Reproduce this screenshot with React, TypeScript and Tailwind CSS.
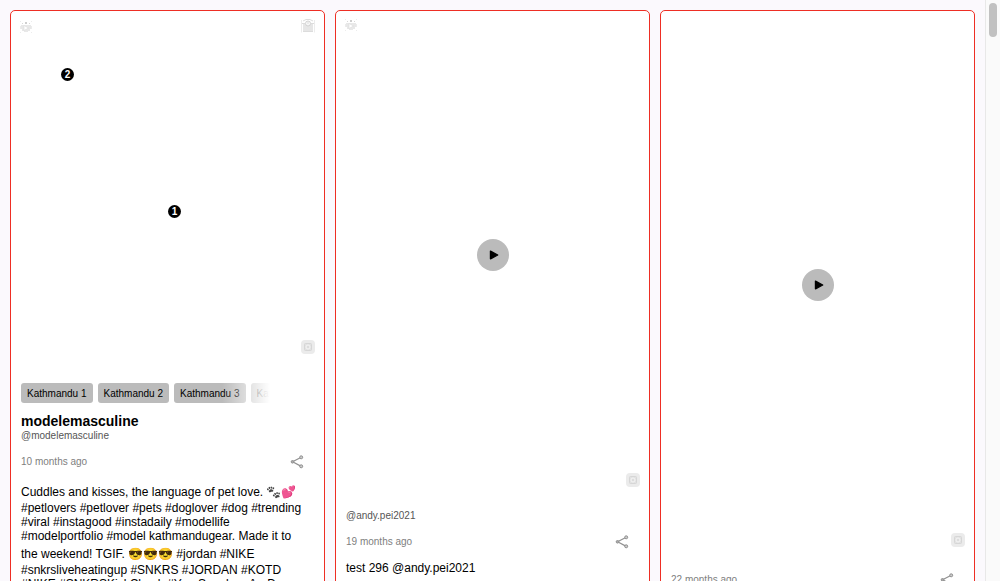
import React from "react";

const fontStack = "font-['Liberation_Sans',Arial,'Noto_Color_Emoji',sans-serif]";

function ReelIcon() {
  return (
    <svg viewBox="0 0 12 12" className="size-3" fill="none">
      <path d="M1 4h10v4h-1v2H8v1H4v-1H2V8H1z" fill="#e8e8e8" />
      <path d="M5 1h2v2H5z" fill="#cfcfcf" />
      <path d="M2 2h1v1H2zM9 2h1v1H9z" fill="#d8d8d8" />
      <path d="M0 0h1v1H0zM11 0h1v1h-1zM0 11h1v1H0zM11 11h1v1h-1zM0 5h1v3H0zM11 5h1v3h-1z" fill="#ececec" />
      <path d="M4 4.500 8.500 7 4 9.500z" fill="#fff" stroke="#dadada" strokeWidth=".6" />
    </svg>
  );
}

function BagIcon() {
  return (
    <svg viewBox="0 0 14 14" className="size-3.5" fill="none">
      <path d="M.5 1v12.500M13.500 1v12.500" stroke="#ececec" />
      <path d="M2 5h10v7H2z" fill="#e6e6e6" />
      <path d="M1 4.500h3M10 4.500h3M2 2l3-1.500h4L12 2" stroke="#dcdcdc" />
      <circle cx="7" cy="4.500" r="2.500" fill="#f8f8f8" stroke="#d2d2d2" />
      <path d="M6 4h2" stroke="#dedede" />
      <path d="M2 12.500h10" stroke="#dcdcdc" />
    </svg>
  );
}

function InstagramIcon() {
  return (
    <svg viewBox="0 0 14 14" className="size-3.5" fill="none" role="img" aria-label="Instagram">
      <rect width="14" height="14" rx="4" fill="#ebebeb" />
      <rect x="3.500" y="3.500" width="7" height="7" rx="1" fill="#e2e2e2" stroke="#d6d6d6" />
      <circle cx="7" cy="7" r="2" fill="#dcdcdc" stroke="#f5f5f5" />
    </svg>
  );
}

function ShareButton() {
  return (
    <button type="button" aria-label="Share" className="mr-2.5 flex size-3.5 items-center justify-center">
      <svg viewBox="0 0 14 14" className="size-3.5" fill="none" stroke="#909090">
        <path d="M3.500 6.300 10.300 2.700M3.500 7.300l6.800 3.600" strokeWidth="1.200" />
        <circle cx="2.500" cy="6.800" r="1.300" fill="#aaa" />
        <circle cx="11.200" cy="2.300" r="1.500" fill="#ccc" />
        <circle cx="11.200" cy="11.300" r="1.500" fill="#ccc" />
      </svg>
    </button>
  );
}

function PlayButton() {
  return (
    <button type="button" aria-label="Play" className="flex size-8 items-center justify-center rounded-full bg-[#bbb]">
      <svg viewBox="0 0 10 10" className="ml-0.5 size-2.5">
        <path d="M1.500 1.200v7.600L8.700 5z" fill="#000" stroke="#000" strokeWidth="1.400" strokeLinejoin="round" />
      </svg>
    </button>
  );
}

function Pin({ label, place }: { label: string; place: string }) {
  return (
    <button
      type="button"
      className={`absolute flex size-[13px] items-center justify-center rounded-full bg-black text-[10px] leading-none font-bold text-white ${place}`}
    >
      {label}
    </button>
  );
}

function Media({ height, reel, bag, play, children }: {
  height: string;
  reel?: boolean;
  bag?: boolean;
  play?: boolean;
  children?: React.ReactNode;
}) {
  return (
    <div className={`relative flex items-center justify-center ${height}`}>
      <div className="absolute inset-x-[9px] top-2 flex items-end justify-between">
        {reel && <ReelIcon />}
        {bag && <BagIcon />}
      </div>
      {play && <PlayButton />}
      {children}
      <span className="absolute right-[9px] bottom-3"><InstagramIcon /></span>
    </div>
  );
}

function Card({ children }: { children: React.ReactNode }) {
  return <article className="min-w-0 rounded-[5px] border border-[#ee2e24] bg-white">{children}</article>;
}

function Meta({ time }: { time: string }) {
  return (
    <div className="flex items-center justify-between">
      <time className="text-[10px] leading-3 text-[#808080]">{time}</time>
      <ShareButton />
    </div>
  );
}

function Emoji({ children, dark }: { children: string; dark?: boolean }) {
  return (
    <span className={`inline-block pt-0.5 leading-[18px] ${dark ? "brightness-75 grayscale" : ""}`}>{children}</span>
  );
}

const tags = ["Kathmandu 1", "Kathmandu 2", "Kathmandu 3", "Kathmandu 4"];

export default function App() {
  return (
    <div className={`flex h-screen overflow-hidden bg-[#fbf9fd] text-black ${fontStack}`}>
      <main className="grid min-w-0 flex-1 grid-cols-3 gap-2.5 p-2.5 pb-0">
        <Card>
          <Media height="h-[355px]" reel bag>
            <Pin label="2" place="top-[57px] left-[50px]" />
            <Pin label="1" place="top-[194px] left-[157px]" />
          </Media>
          <div className="px-2.5 pt-[17px]">
            <div className="relative mr-11 flex gap-[5px] overflow-hidden">
              {tags.map((tag) => (
                <button key={tag} type="button" className="h-5 shrink-0 rounded-[3px] bg-[#bbb] px-1.5 pt-px text-[10px] leading-5">
                  {tag}
                </button>
              ))}
              <span className="pointer-events-none absolute inset-y-0 right-0 w-12 bg-gradient-to-r from-white/0 to-white" />
            </div>
            <h2 className="mt-2.5 text-[14px] leading-4 font-bold">modelemasculine</h2>
            <p className="mt-px mb-[13px] text-[10px] leading-3 text-[#555]">@modelemasculine</p>
            <Meta time="10 months ago" />
            <p className="mt-3 pr-2.5 text-[12px] leading-[14px]">
              Cuddles and kisses, the language of pet love. <Emoji dark>🐾</Emoji><Emoji>💕</Emoji> #petlovers #petlover
              #pets #doglover #dog #trending #viral #instagood #instadaily #modellife #modelportfolio #model
              kathmandugear. Made it to the weekend! TGIF. <Emoji>😎😎😎</Emoji> #jordan #NIKE #snkrsliveheatingup
              #SNKRS #JORDAN #KOTD #NIKE #SNKRSKickCheck #YourSneakersAreDope
            </p>
          </div>
        </Card>
        <Card>
          <Media height="h-[488px]" reel play />
          <div className="px-2.5 pt-[11px]">
            <p className="mb-[13px] text-[10px] leading-3 text-[#555]">@andy.pei2021</p>
            <Meta time="19 months ago" />
            <p className="mt-3 pr-2.5 text-[12px] leading-[14px]">test 296 @andy.pei2021</p>
          </div>
        </Card>
        <Card>
          <Media height="h-[548px]" play />
          <div className="px-2.5 pt-[14px]">
            <Meta time="22 months ago" />
          </div>
        </Card>
      </main>
      <div aria-hidden="true" className="flex w-[15px] shrink-0 justify-center border-l border-[#e8e8e8] bg-[#fafafa] pt-[3px]">
        <div className="h-[34px] w-2 rounded-full bg-[#c1c1c1]" />
      </div>
    </div>
  );
}
